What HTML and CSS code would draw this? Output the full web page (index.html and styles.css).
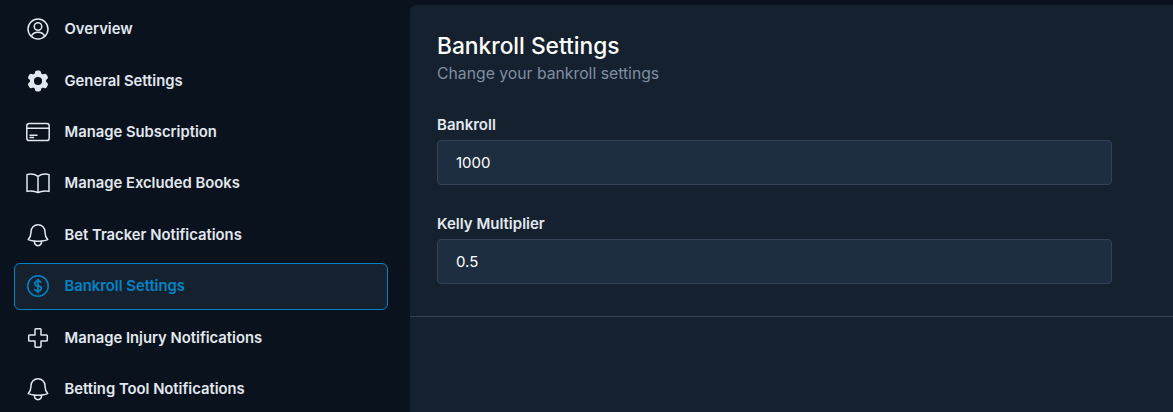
FILE: index.html
```html
<!DOCTYPE html>
<html lang="en">

<head>
  <meta charset="UTF-8" />
  <meta name="viewport" content="width=device-width, initial-scale=1.0" />
  <title>Bankroll Settings</title>
  <link rel="stylesheet" href="styles.css">
</head>

<body>
  <div class="layout">
    <nav class="sidebar">
      <a class="nav-item" href="#">
        <svg class="nav-icon" viewBox="0 0 24 24"><circle cx="12" cy="9.5" r="3.75"/><circle cx="12" cy="12" r="10"/><path d="M5.200 19.300a7.500 7.500 0 0 1 6.800-4.050 7.500 7.500 0 0 1 6.800 4.050"/></svg>
        <span>Overview</span>
      </a>
      <a class="nav-item" href="#">
        <svg class="nav-icon nav-icon-solid" viewBox="0.9 0.9 22.2 22.2"><path fill-rule="evenodd" d="M11.08 2.25c-.92 0-1.7.66-1.85 1.57l-.18 1.07a.7.7 0 0 1-.42.49c-.25.11-.5.25-.73.4a.7.7 0 0 1-.64.05L6.24 5.45a1.88 1.88 0 0 0-2.28.82l-.92 1.6a1.88 1.88 0 0 0 .43 2.38l.84.69c.18.15.27.39.26.63a7 7 0 0 0 0 .84c.01.24-.08.48-.26.63l-.84.69a1.88 1.88 0 0 0-.43 2.38l.92 1.6a1.88 1.88 0 0 0 2.28.82l1.02-.38a.7.7 0 0 1 .64.05c.23.15.48.29.73.4.22.1.38.28.42.49l.18 1.07c.15.91.93 1.57 1.85 1.57h1.84c.92 0 1.7-.66 1.85-1.57l.18-1.07a.7.7 0 0 1 .42-.49c.25-.11.5-.25.73-.4a.7.7 0 0 1 .64-.05l1.02.38a1.88 1.88 0 0 0 2.28-.82l.92-1.6a1.88 1.88 0 0 0-.43-2.38l-.84-.69a.75.75 0 0 1-.26-.63 7 7 0 0 0 0-.84.75.75 0 0 1 .26-.63l.84-.69c.71-.58.89-1.59.43-2.38l-.92-1.6a1.88 1.88 0 0 0-2.28-.82l-1.02.38a.7.7 0 0 1-.64-.05 6.5 6.5 0 0 0-.73-.4.7.7 0 0 1-.42-.49l-.18-1.07a1.88 1.88 0 0 0-1.85-1.57h-1.84ZM12 15.750a3.750 3.750 0 1 0 0-7.500 3.750 3.750 0 0 0 0 7.500Z"/></svg>
        <span>General Settings</span>
      </a>
      <a class="nav-item" href="#">
        <svg class="nav-icon" viewBox="0 0 24 24"><rect x="0.800" y="3.600" width="22.400" height="17" rx="2.400"/><path d="M.8 8.200h22.400M4 15.200h7M4 17.500h3.500"/></svg>
        <span>Manage Subscription</span>
      </a>
      <a class="nav-item" href="#">
        <svg class="nav-icon" viewBox="0 0 24 24"><path d="M12 5.300C10 3.800 7.500 3 4.500 3 3.300 3 2.100 3.200 1 3.600v16.800c1.100-.3 2.300-.5 3.500-.5 3 0 5.500.6 7.500 1.600m0-16.200C14 3.800 16.500 3 19.500 3c1.200 0 2.400.2 3.500.6v16.800c-1.100-.3-2.300-.5-3.500-.5-3 0-5.500.6-7.500 1.600m0-16.200v16.200"/></svg>
        <span>Manage Excluded Books</span>
      </a>
      <a class="nav-item" href="#">
        <svg class="nav-icon nav-icon-bell" viewBox="1.75 1.6 20.500 20.500"><path d="M14.86 17.08a23.85 23.85 0 0 0 5.45-1.31A8.97 8.97 0 0 1 18 9.75V9A6 6 0 0 0 6 9v.75a8.97 8.97 0 0 1-2.31 6.02c1.73.64 3.56 1.09 5.45 1.31m5.72 0a24.25 24.25 0 0 1-5.72 0m5.72 0a3 3 0 1 1-5.72 0"/></svg>
        <span>Bet Tracker Notifications</span>
      </a>
      <a class="nav-item nav-item-active" href="#">
        <svg class="nav-icon" viewBox="0 0 24 24"><path transform="translate(-1.44 -1.44) scale(1.12)" d="M12 6v12m-3-2.820.88.660c1.170.880 3.070.880 4.240 0 1.170-.880 1.170-2.300 0-3.180-.590-.440-1.350-.660-2.120-.660-.730 0-1.450-.220-2-.660-1.100-.880-1.100-2.300 0-3.180 1.100-.880 2.900-.880 4 0l.410.330"/><circle cx="12" cy="12" r="10.250"/></svg>
        <span>Bankroll Settings</span>
      </a>
      <a class="nav-item" href="#">
        <svg class="nav-icon" viewBox="0 0 24 24"><path d="M9 3.500a.8.8 0 0 1 .8-.8h4.400a.8.8 0 0 1 .8.8V9h5.500a.8.8 0 0 1 .8.8v4.400a.8.8 0 0 1-.8.8H15v5.500a.8.8 0 0 1-.8.8H9.800a.8.8 0 0 1-.8-.8V15H3.500a.8.8 0 0 1-.8-.8V9.800a.8.8 0 0 1 .8-.8H9Z"/></svg>
        <span>Manage Injury Notifications</span>
      </a>
      <a class="nav-item" href="#">
        <svg class="nav-icon nav-icon-bell" viewBox="1.75 1.6 20.500 20.500"><path d="M14.86 17.08a23.85 23.85 0 0 0 5.45-1.31A8.97 8.97 0 0 1 18 9.75V9A6 6 0 0 0 6 9v.75a8.97 8.97 0 0 1-2.31 6.02c1.73.64 3.56 1.09 5.45 1.31m5.72 0a24.25 24.25 0 0 1-5.72 0m5.72 0a3 3 0 1 1-5.72 0"/></svg>
        <span>Betting Tool Notifications</span>
      </a>
    </nav>

    <main class="panel">
      <form class="settings-form">
        <h1>Bankroll Settings</h1>
        <p class="subtitle">Change your bankroll settings</p>
        <label for="bankroll">Bankroll</label>
        <input type="text" id="bankroll" name="bankroll" value="1000" />
        <label for="kelly">Kelly Multiplier</label>
        <input type="text" id="kelly" name="kelly" value="0.5" />
      </form>
    </main>
  </div>
</body>

</html>
```

FILE: styles.css
```css
/* Global Styles */
* {
  box-sizing: border-box;
  margin: 0;
  padding: 0;
  font-family: Inter, "Noto Sans", sans-serif;
}

html,
body {
  height: 100%;
  overflow: hidden;
}

body {
  background: #0a121d;
  color: #e2e8f0;
}

.layout {
  display: flex;
  height: 412px;
}

/* Sidebar */
.sidebar {
  display: flex;
  flex-direction: column;
  flex: none;
  gap: 4px;
  width: 410px;
  padding: 5.4px 22px 0 14px;
}

.nav-item {
  display: flex;
  align-items: center;
  flex: none;
  gap: 14.5px;
  height: 47.43px;
  padding-left: 11px;
  border: 1px solid transparent;
  border-radius: 6px;
  color: #e2e8f0;
  font-size: 14.8px;
  font-weight: 600;
  text-decoration: none;
}

.nav-item-active {
  background: #15212e;
  border-color: #0284c7;
  color: #0284c7;
}

.nav-icon {
  flex: none;
  width: 24px;
  height: 24px;
  fill: none;
  stroke: currentColor;
  stroke-width: 1.5;
  stroke-linecap: round;
  stroke-linejoin: round;
}

.nav-icon-solid {
  fill: currentColor;
  stroke: none;
}

.nav-icon-bell {
  stroke-width: 1.3;
}

/* Panel */
.panel {
  flex: 1;
  margin-top: 5px;
  background: #15212e;
  border-radius: 6px 0 0 0;
}

.settings-form {
  height: 312px;
  padding: 25px 61px 0 27px;
  border-bottom: 1px solid #334155;
}

h1 {
  color: #ffffff;
  font-size: 22.75px;
  font-weight: 500;
  line-height: 32px;
}

.subtitle {
  margin-bottom: 29px;
  color: #7f8ea3;
  font-size: 15.75px;
  line-height: 24px;
}

label {
  display: block;
  margin-bottom: 5px;
  color: #e2e8f0;
  font-size: 15px;
  font-weight: 600;
  line-height: 20px;
}

input[type="text"] {
  display: block;
  width: 100%;
  height: 45px;
  margin-bottom: 29px;
  padding: 0 18px;
  background: #1e2d3f;
  border: 1px solid #334155;
  border-radius: 4px;
  color: #ffffff;
  font-size: 15px;
}
```
